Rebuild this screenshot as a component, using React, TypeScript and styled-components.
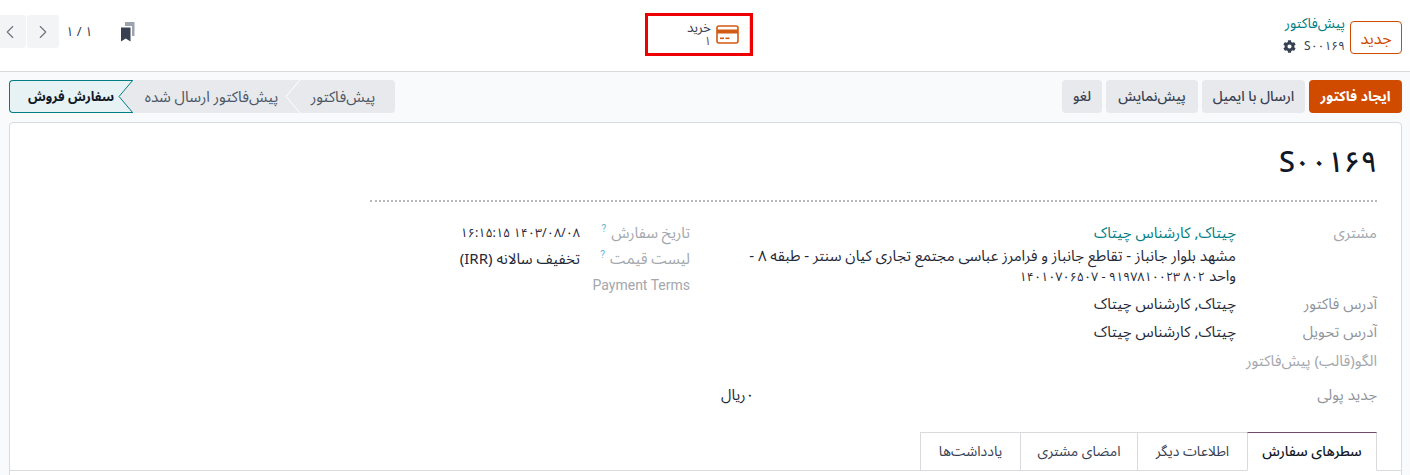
import React, {FC} from 'react'
import styled, {createGlobalStyle} from 'styled-components'
import {ChevronLeft, ChevronRight} from 'lucide-react'
import {FaCog} from 'react-icons/fa'

const GlobalStyle = createGlobalStyle`
  html, body {
    margin: 0;
    padding: 0;
    background: #fff;
  }
  body {
    font-family: "Noto Sans Arabic", "DejaVu Sans", "Noto Sans", sans-serif;
    font-size: 15px;
    color: #374151;
  }
  * {
    box-sizing: border-box;
  }
`

const Page = styled.div`
  width: 1410px;
  height: 475px;
  overflow: hidden;
  direction: rtl;
  background: #f9fafb;
`

const TopBar = styled.div`
  height: 72px;
  background: #fff;
  border-bottom: 1px solid #d8dadd;
  display: grid;
  grid-template-columns: 1fr 108px 1fr;
  align-items: start;
  padding: 0 8px 0 0;
`

const TopStart = styled.div`
  display: flex;
  align-items: center;
  gap: 5px;
  padding-top: 19px;
`

const NewButton = styled.button`
  width: 52px;
  height: 33px;
  font: inherit;
  font-size: 16px;
  color: #d04a00;
  background: #fff;
  border: 1px solid #d04a00;
  border-radius: 4px;
  padding: 0;
`

const Crumbs = styled.div`
  display: flex;
  flex-direction: column;
  gap: 6px;
  margin-top: -4px;
  font-size: 14px;
  line-height: 17px;
`

const CrumbLink = styled.span`
  color: #017e84;
`

const CrumbRecord = styled.span`
  display: flex;
  align-items: center;
  gap: 8px;
  font-size: 12px;
  color: #374151;
`

const StatBox = styled.div`
  margin: 13px 2px 0 0;
  width: 108px;
  height: 43px;
  border: 3px solid #ee0000;
  background: #fff;
  box-shadow: inset -1px 0 #d8dadd;
  display: flex;
  align-items: center;
  gap: 5px;
  padding-right: 11px;
`

const StatText = styled.div`
  display: flex;
  flex-direction: column;
  padding-top: 1px;
  font-size: 13.5px;
  line-height: 14px;
  color: #374151;
`

const StatCount = styled.span`
  font-size: 12px;
  color: #714b67;
`

const TopEnd = styled.div`
  display: flex;
  align-items: center;
  justify-content: flex-end;
  padding-top: 15px;
  margin-left: -7px;
`

const BookmarkSlot = styled.div`
  display: flex;
  margin-left: 29px;
`

const PagerText = styled.div`
  direction: ltr;
  margin-left: 7px;
  font-size: 13px;
  white-space: nowrap;
`

const PagerButton = styled.button`
  width: 32px;
  height: 33px;
  flex: none;
  margin-left: 1px;
  background: #f3f4f6;
  border: none;
  border-radius: 3px;
  color: #6b7280;
  padding: 0;
  display: flex;
  align-items: center;
  justify-content: center;
`

const ControlPanel = styled.div`
  height: 50px;
  padding: 8px 8px 0 9px;
  display: flex;
  justify-content: space-between;
  align-items: flex-start;
`

const Actions = styled.div`
  display: flex;
  gap: 4px;
`

const ActionButton = styled.button<{$primary?: boolean; $width: number}>`
  width: ${p => p.$width}px;
  height: 33px;
  padding: 0;
  font: inherit;
  font-size: 14px;
  font-weight: ${p => (p.$primary ? 700 : 500)};
  border: none;
  border-radius: 4px;
  background: ${p => (p.$primary ? '#d04a00' : '#e7e9ed')};
  color: ${p => (p.$primary ? '#fff' : '#374151')};
  white-space: nowrap;
`

const StatusBar = styled.div`
  display: flex;
  height: 33px;
`

const StatusItem = styled.div<{$current?: boolean; $width: number; $first?: boolean; $layer: number}>`
  position: relative;
  z-index: ${p => p.$layer};
  width: ${p => p.$width}px;
  height: 33px;
  padding-right: ${p => (p.$current ? 0 : 8)}px;
  font-size: ${p => (p.$current ? '13px' : '15px')};
  font-weight: ${p => (p.$current ? 700 : 400)};
  display: flex;
  align-items: center;
  justify-content: center;
  white-space: nowrap;
  background: ${p => (p.$current ? '#e6f2f3' : '#e7e9ed')};
  color: ${p => (p.$current ? '#111827' : '#4b5563')};
  border: ${p => (p.$current ? '1px solid #017e84' : 'none')};
  border-right: none;
  border-radius: ${p => (p.$current ? '4px 0 0 4px' : p.$first ? '0 4px 4px 0' : '0')};
`

const StatusNotch = styled.svg`
  position: absolute;
  top: 0;
  left: -14px;
  width: 15px;
  height: 33px;
`

const Sheet = styled.div`
  margin: 0 8px 0 9px;
  height: 360px;
  background: #fff;
  border: 1px solid #d8dadd;
  border-radius: 4px 4px 0 0;
  padding: 0 24px 0 0;
  position: relative;
`

const Title = styled.h1`
  margin: 0;
  padding-top: 20px;
  height: 79px;
  font-size: 29px;
  line-height: 40px;
  font-weight: 500;
  letter-spacing: -1px;
  color: #111827;
  border-bottom: 2px dotted #b5b8bd;
  margin-left: 360px;
`

const Columns = styled.div`
  display: flex;
  margin-top: 21px;
`

const RightGroup = styled.div`
  width: 656px;
  flex: none;
`

const LeftGroup = styled.div`
  width: 320px;
  margin-right: 31px;
`

const Field = styled.div<{$height: number; $labelWidth?: number; $gap?: number}>`
  display: grid;
  grid-template-columns: ${p => p.$labelWidth ?? 141}px 1fr;
  min-height: ${p => p.$height}px;
  margin-top: ${p => p.$gap ?? 0}px;
  line-height: 20px;
  font-size: 15px;
`

const Label = styled.div<{$latin?: boolean}>`
  color: #a3a7ad;
  white-space: nowrap;
  font-weight: 400;
  ${p => (p.$latin ? 'font-family: Roboto, sans-serif; font-size: 14px;' : '')}
`

const LabelDark = styled(Label)`
  color: #8f949b;
`

const Hint = styled.sup`
  color: #5fb3d0;
  font-size: 10px;
  font-family: Roboto, sans-serif;
  margin-right: 5px;
  line-height: 0;
`

const Value = styled.div`
  color: #1f2937;
  white-space: nowrap;
`

const DateValue = styled(Value)`
  font-size: 12.5px;
`

const ValueLink = styled.div`
  color: #017e84;
`

const Address = styled.div`
  color: #1f2937;
  margin-top: 3px;
  width: 488px;
  white-space: nowrap;
`

const Digits = styled.span`
  font-size: 12.5px;
`

const CurrencyField = styled.div`
  display: grid;
  grid-template-columns: 623px 1fr;
  margin-top: 10px;
  line-height: 20px;
  font-size: 15px;
`

const TabBar = styled.div`
  position: absolute;
  top: 309px;
  left: 0;
  right: 0;
  height: 39px;
  border-bottom: 1px solid #d8dadd;
  padding-right: 24px;
  display: flex;
`

const Tab = styled.div<{$active?: boolean; $width: number}>`
  width: ${p => p.$width}px;
  height: 39px;
  font-size: 14px;
  font-weight: ${p => (p.$active ? 500 : 400)};
  color: ${p => (p.$active ? '#111827' : '#374151')};
  background: #fff;
  border: 1px solid #d8dadd;
  border-right: ${p => (p.$active ? '1px solid #d8dadd' : 'none')};
  border-top: ${p => (p.$active ? '1px solid #714b67' : '1px solid #d8dadd')};
  border-bottom: ${p => (p.$active ? '1px solid #fff' : '1px solid #d8dadd')};
  display: flex;
  align-items: center;
  justify-content: center;
  white-space: nowrap;
`

const CardIcon: FC = () => (
    <svg width="23" height="19" viewBox="0 0 23 19" fill="none">
        <rect x="1" y="1" width="21" height="17" rx="2" stroke="#d35a12" strokeWidth="1.6"/>
        <rect x="1" y="4.5" width="21" height="4" fill="#d35a12"/>
        <rect x="4" y="12.5" width="4" height="1.6" fill="#d35a12"/>
        <rect x="9.5" y="12.5" width="4" height="1.6" fill="#d35a12"/>
    </svg>
)

const BookmarkIcon: FC = () => (
    <svg width="14" height="20" viewBox="0 0 14 20">
        <path d="M4 0h9.5v14H11V4H4z" fill="#9ca3af"/>
        <path d="M0 5.5h9.5V19.500L4.750 16.500 0 19.500z" fill="#374151"/>
    </svg>
)

const App: FC = () => (
    <Page>
        <GlobalStyle/>
        <TopBar>
            <TopStart>
                <NewButton>جدید</NewButton>
                <Crumbs>
                    <CrumbLink>پیش‌فاکتور</CrumbLink>
                    <CrumbRecord>
                        <span>S۰۰۱۶۹</span>
                        <FaCog size={13} color="#374151"/>
                    </CrumbRecord>
                </Crumbs>
            </TopStart>
            <StatBox>
                <CardIcon/>
                <StatText>
                    <span>خرید</span>
                    <StatCount>۱</StatCount>
                </StatText>
            </StatBox>
            <TopEnd>
                <BookmarkSlot><BookmarkIcon/></BookmarkSlot>
                <PagerText>۱ / ۱</PagerText>
                <PagerButton><ChevronRight size={22} strokeWidth={1.2}/></PagerButton>
                <PagerButton><ChevronLeft size={22} strokeWidth={1.2}/></PagerButton>
            </TopEnd>
        </TopBar>
        <ControlPanel>
            <Actions>
                <ActionButton $primary $width={93}>ایجاد فاکتور</ActionButton>
                <ActionButton $width={103}>ارسال با ایمیل</ActionButton>
                <ActionButton $width={92}>پیش‌نمایش</ActionButton>
                <ActionButton $width={40}>لغو</ActionButton>
            </Actions>
            <StatusBar>
                <StatusItem $first $layer={3} $width={96}>
                    پیش‌فاکتور
                    <StatusNotch viewBox="0 0 15 33">
                        <polygon points="15,0 1,16.500 15,33" fill="#e7e9ed"/>
                        <polyline points="15,0 1,16.500 15,33" fill="none" stroke="#fff" strokeWidth="1"/>
                    </StatusNotch>
                </StatusItem>
                <StatusItem $layer={2} $width={167}>
                    پیش‌فاکتور ارسال شده
                    <StatusNotch viewBox="0 0 15 33">
                        <polygon points="15,0 1,16.500 15,33" fill="#e7e9ed"/>
                        <polyline points="15,0 1,16.500 15,33" fill="none" stroke="#017e84" strokeWidth="1"/>
                    </StatusNotch>
                </StatusItem>
                <StatusItem $current $layer={1} $width={123}>سفارش فروش</StatusItem>
            </StatusBar>
        </ControlPanel>
        <Sheet>
            <Title>S۰۰۱۶۹</Title>
            <Columns>
                <RightGroup>
                    <Field $height={60}>
                        <Label>مشتری</Label>
                        <div>
                            <ValueLink>چیتاک, کارشناس چیتاک</ValueLink>
                            <Address>
                                مشهد بلوار جانباز - تقاطع جانباز و فرامرز عباسی مجتمع تجاری کیان سنتر - طبقه ۸ -
                                <br/>
                                واحد <Digits>۸۰۲ ۹۱۹۷۸۱۰۰۲۳ - ۱۴۰۱۰۷۰۶۵۰۷</Digits>
                            </Address>
                        </div>
                    </Field>
                    <Field $height={28} $gap={7}>
                        <LabelDark>آدرس فاکتور</LabelDark>
                        <Value>چیتاک, کارشناس چیتاک</Value>
                    </Field>
                    <Field $height={29}>
                        <LabelDark>آدرس تحویل</LabelDark>
                        <Value>چیتاک, کارشناس چیتاک</Value>
                    </Field>
                    <Field $height={24}>
                        <Label>الگو(قالب) پیش‌فاکتور</Label>
                    </Field>
                </RightGroup>
                <LeftGroup>
                    <Field $height={26} $labelWidth={110}>
                        <Label>تاریخ سفارش<Hint>?</Hint></Label>
                        <DateValue>۱۴۰۳/۰۸/۰۸ ۱۶:۱۵:۱۵</DateValue>
                    </Field>
                    <Field $height={26} $labelWidth={110}>
                        <Label>لیست قیمت<Hint>?</Hint></Label>
                        <Value>تخفیف سالانه (IRR)</Value>
                    </Field>
                    <Field $height={26} $labelWidth={110}>
                        <Label $latin>Payment Terms</Label>
                    </Field>
                </LeftGroup>
            </Columns>
            <CurrencyField>
                <LabelDark>جدید پولی</LabelDark>
                <Value>۰ریال</Value>
            </CurrencyField>
            <TabBar>
                <Tab $active $width={130}>سطرهای سفارش</Tab>
                <Tab $width={110}>اطلاعات دیگر</Tab>
                <Tab $width={117}>امضای مشتری</Tab>
                <Tab $width={100}>یادداشت‌ها</Tab>
            </TabBar>
        </Sheet>
    </Page>
)

export default App
